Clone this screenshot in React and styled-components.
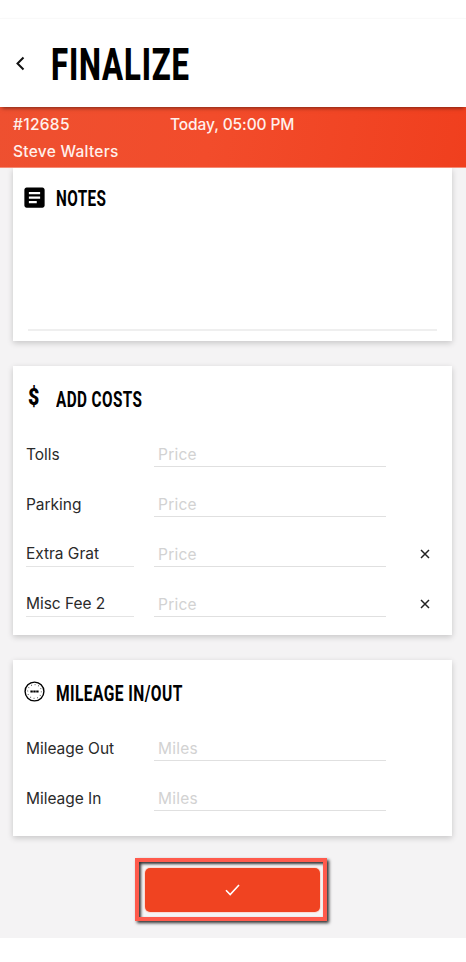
import React from 'react';
import styled, { createGlobalStyle } from 'styled-components';
import { MdArticle } from 'react-icons/md';


const GlobalStyle = createGlobalStyle`
    * {
        box-sizing: border-box;
    }
    body {
        margin: 0;
        background-color: #fff;
        font-family: Inter, "Liberation Sans", sans-serif;
    }
`;
const Page = styled.div`
    width: 466px;
    height: 962px;
    display: flex;
    flex-direction: column;
    overflow: hidden;
    padding-top: 18px;
`;
const Header = styled.header`
    height: 89px;
    flex-shrink: 0;
    display: flex;
    align-items: center;
    padding: 5px 0 0 14px;
    border-top: 1px solid #f9f9f9;
    background-color: #fff;
    box-shadow: 0 3px 4px -2px rgba(0,0,0,0.5);
    z-index: 2;
`;
const BackIcon = styled.svg`
    width: 12px;
    height: 16px;
    margin: -5px 25px 0 0;
`;
const Condensed = styled.span`
    display: inline-block;
    font-family: Roboto, "Liberation Sans", sans-serif;
    font-weight: ${props => props.$weight || 700};
    font-size: ${props => props.$size || '22.5px'};
    line-height: 1;
    letter-spacing: ${props => props.$spacing || '0.6px'};
    white-space: nowrap;
    color: #000;
    transform: scaleX(${props => props.$scale});
    transform-origin: ${props => props.$origin || 'left'} center;
`;
const TripBar = styled.div`
    height: 61px;
    flex-shrink: 0;
    padding: 4px 13px 0;
    display: grid;
    grid-template-columns: 157px 1fr;
    grid-auto-rows: 27px;
    align-items: center;
    background: linear-gradient(100deg, #ee5030 0%, #f24c2b 45%, #f03f1e 100%);
    border-bottom: 1px solid #f58a74;
    color: #fff0ec;
    z-index: 1;
`;
const TripText = styled.span`
    font-size: 15.5px;
    font-weight: 500;
    letter-spacing: ${props => props.$spacing || '0'};
    white-space: nowrap;
`;
const Content = styled.main`
    height: 770px;
    flex-shrink: 0;
    padding: 0 14px 0 13px;
    background-color: #f4f3f4;
    display: flex;
    flex-direction: column;
    align-items: center;
`;
const Card = styled.section`
    width: 100%;
    height: ${props => props.$height};
    flex-shrink: 0;
    margin-bottom: 25px;
    padding: 0 12px 0 13px;
    background-color: #fff;
    box-shadow: 0 2px 6px rgba(0,0,0,0.19);
`;
const CardTitle = styled.div`
    height: ${props => props.$height || '51px'};
    display: flex;
    align-items: center;
    padding-top: 15px;
`;
const TitleIcon = styled.span`
    width: 18px;
    height: 24px;
    margin: -3px 13px 0 -1px;
    display: flex;
    align-items: center;
    justify-content: center;
    color: #000;
    svg {
        flex-shrink: 0;
    }
`;
const NotesField = styled.div`
    height: 117px;
    margin: 0 3px 0 2px;
    border-bottom: 2px solid #efefef;
`;
const Row = styled.div`
    height: 50px;
    display: grid;
    grid-template-columns: 108px 232px 1fr;
    column-gap: 20px;
    align-items: end;
`;
const Label = styled.div`
    height: 26px;
    line-height: ${props => props.$editable ? '25px' : '27px'};
    font-size: 15.5px;
    letter-spacing: -0.03px;
    color: #2a2a2a;
    white-space: nowrap;
    border-bottom: ${props => props.$editable ? '1px solid #e4e4e4' : '1px solid transparent'};
`;
const Field = styled.div`
    height: 26px;
    line-height: 27px;
    padding-left: 4px;
    font-size: 15.5px;
    letter-spacing: 0.25px;
    color: #d2d2d2;
    border-bottom: 1px solid #e0e0e0;
`;
const Remove = styled.svg`
    width: 10px;
    height: 10px;
    margin: 0 0 8px 14px;
`;
const Highlight = styled.div`
    width: 192px;
    height: 63px;
    margin: -3px 3px 0 0;
    flex-shrink: 0;
    padding: 6px 3px 5px 6px;
    border: 4px solid #ff5a4c;
    background-color: #f6f5f6;
    box-shadow: 2px 2px 3px 0 rgba(0,0,0,0.8), inset 2px 2px 3px 0 rgba(0,0,0,0.8);
`;
const SubmitButton = styled.button`
    width: 175px;
    height: 44px;
    border: none;
    border-radius: 5px;
    padding: 0;
    display: flex;
    align-items: center;
    justify-content: center;
    background-color: #f04321;
    box-shadow: 0 0 1px 1px #fbd9d2;
`;

const GaugeIcon = () => (
    <svg width="21" height="21" viewBox="0 0 21 21" fill="none" stroke="#000">
        <circle cx="10.5" cy="10.5" r="9.4" strokeWidth="1.4" />
        <circle cx="10.5" cy="10.5" r="6.9" strokeWidth="1.2" strokeDasharray="0.8 2.81" stroke="#555" />
        <path d="M6.4 10.5h8.2" strokeWidth="2" strokeDasharray="2.4 0.5" />
    </svg>
);

const FormRow = ({ label, placeholder, editable }) => (
    <Row>
        <Label $editable={editable}>{label}</Label>
        <Field>{placeholder}</Field>
        {editable && (
            <Remove viewBox="0 0 10 10" fill="none" stroke="#222" strokeWidth="1.5">
                <path d="M1 1l8 8M9 1L1 9" />
            </Remove>
        )}
    </Row>
);

const costs = [
    { label: 'Tolls' },
    { label: 'Parking' },
    { label: 'Extra Grat', editable: true },
    { label: 'Misc Fee 2', editable: true },
];

const App = () => (
    <>
        <GlobalStyle />
        <Page>
            <Header>
                <BackIcon viewBox="0 0 12 16" fill="none" stroke="#111" strokeWidth="2">
                    <path d="M9.5 2.5L3.5 8.5L9.5 14.5" />
                </BackIcon>
                <Condensed $size="43.5px" $scale={0.715} $spacing="1.2px" $weight={800}>FINALIZE</Condensed>
            </Header>
            <TripBar>
                <TripText $spacing="0.3px">#12685</TripText>
                <TripText $spacing="-0.1px">Today, 05:00 PM</TripText>
                <TripText $spacing="0.27px">Steve Walters</TripText>
            </TripBar>
            <Content>
                <Card $height="173px">
                    <CardTitle $height="46px">
                        <TitleIcon><MdArticle size={27} /></TitleIcon>
                        <Condensed $scale={0.68}>NOTES</Condensed>
                    </CardTitle>
                    <NotesField />
                </Card>
                <Card $height="269px">
                    <CardTitle>
                        <TitleIcon>
                            <Condensed $size="23px" $weight={900} $scale={0.85} $origin="center">$</Condensed>
                        </TitleIcon>
                        <Condensed $scale={0.68}>ADD COSTS</Condensed>
                    </CardTitle>
                    {costs.map(cost => (
                        <FormRow key={cost.label} placeholder="Price" {...cost} />
                    ))}
                </Card>
                <Card $height="176px">
                    <CardTitle>
                        <TitleIcon><GaugeIcon /></TitleIcon>
                        <Condensed $scale={0.692}>MILEAGE IN/OUT</Condensed>
                    </CardTitle>
                    <FormRow label="Mileage Out" placeholder="Miles" />
                    <FormRow label="Mileage In" placeholder="Miles" />
                </Card>
                <Highlight>
                    <SubmitButton>
                        <svg width="15" height="12" viewBox="0 0 15 12" fill="none" stroke="#fff" strokeWidth="1.6">
                            <path d="M1 6.2L5.2 10.5L14 1" />
                        </svg>
                    </SubmitButton>
                </Highlight>
            </Content>
        </Page>
    </>
);

export default App;
